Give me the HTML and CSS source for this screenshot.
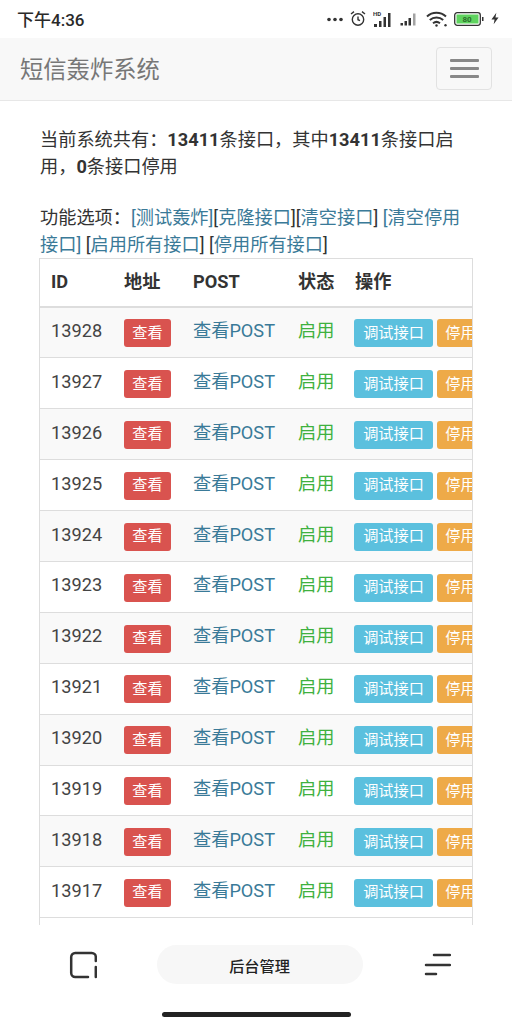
FILE: index.html
```html
<!DOCTYPE html>
<html lang="zh">
<head>
<meta charset="utf-8">
<title>短信轰炸系统</title>
<link rel="stylesheet" href="styles.css">
</head>
<body>
<div class="phone">
  <div class="status">
    <span class="time">下午4:36</span>
    <div class="status-icons">
      <svg width="16" height="6" viewBox="0 0 16 6"><circle cx="2" cy="3.500" r="1.800"/><circle cx="8" cy="3.500" r="1.800"/><circle cx="14" cy="3.500" r="1.800"/></svg>
      <svg class="alarm" width="16" height="17" viewBox="0 0 16 17"><circle cx="8" cy="9.500" r="5.700"/><path d="M8 6.500v3.200l2 1M1 4l3-2.400M15 4l-3-2.400"/></svg>
      <svg width="20" height="18" viewBox="0 0 20 18"><text x="0" y="6" class="hd">HD</text><path d="M1 14h3v3H1zM6 11h2.500v6H6zM10.500 7h2.500v10h-2.500zM15 3h2.500v14H15z"/></svg>
      <svg width="16" height="14" viewBox="0 0 16 14"><path d="M0.500 11h2.500v2.500H0.500zM4.500 9h2.500v4.500H4.500zM8.500 6h2.500v7.500H8.500z"/><path class="dim" d="M13 1.500h2.500v12H13z"/></svg>
      <svg class="wifi" width="21" height="16" viewBox="0 0 21 16"><path d="M1 5.500c5.300-5 13.500-5 19 0M3.800 9c3.800-3.300 9.600-3.300 13.400 0M7 12.200c2-1.500 5-1.500 7 0"/><circle cx="10.500" cy="14.500" r="1.200" class="fill"/><circle cx="19.500" cy="14.300" r="1.200" class="fill"/></svg>
      <svg width="30" height="14" viewBox="0 0 30 14"><rect class="batt" x="0.700" y="0.700" width="25.600" height="12.600" rx="2.500"/><rect class="charge" x="2.500" y="2.500" width="22" height="9"/><text x="8.500" y="10" class="pct">80</text><rect x="28" y="5" width="1.500" height="4"/></svg>
      <svg width="8" height="13" viewBox="0 0 9 13"><path d="M6 0L0.500 7.500H4L3 13 8.500 5.500H5z"/></svg>
    </div>
  </div>

  <nav class="navbar">
    <span class="brand">短信轰炸系统</span>
    <button class="toggle" type="button" aria-label="菜单"><i></i><i></i><i></i></button>
  </nav>

  <main class="content">
    <p class="summary">当前系统共有：<b>13411</b>条接口，其中<b>13411</b>条接口启用，<b>0</b>条接口停用</p>
    <p class="options">功能选项：<a>[测试轰炸]</a>[<a>克隆接口</a>][<a>清空接口</a>] <a>[清空停用接口]</a> [<a>启用所有接口</a>] [<a>停用所有接口</a>]</p>
    <div class="table-wrap">
      <table>
        <thead>
          <tr><th class="c-id">ID</th><th class="c-addr">地址</th><th class="c-post">POST</th><th class="c-state">状态</th><th class="c-op">操作</th></tr>
        </thead>
        <tbody>
          <tr><td>13928</td><td><span class="btn red">查看</span></td><td><a>查看POST</a></td><td class="on">启用</td><td class="ops"><span class="btn blue">调试接口</span><span class="btn orange">停用</span></td></tr>
          <tr><td>13927</td><td><span class="btn red">查看</span></td><td><a>查看POST</a></td><td class="on">启用</td><td class="ops"><span class="btn blue">调试接口</span><span class="btn orange">停用</span></td></tr>
          <tr><td>13926</td><td><span class="btn red">查看</span></td><td><a>查看POST</a></td><td class="on">启用</td><td class="ops"><span class="btn blue">调试接口</span><span class="btn orange">停用</span></td></tr>
          <tr><td>13925</td><td><span class="btn red">查看</span></td><td><a>查看POST</a></td><td class="on">启用</td><td class="ops"><span class="btn blue">调试接口</span><span class="btn orange">停用</span></td></tr>
          <tr><td>13924</td><td><span class="btn red">查看</span></td><td><a>查看POST</a></td><td class="on">启用</td><td class="ops"><span class="btn blue">调试接口</span><span class="btn orange">停用</span></td></tr>
          <tr><td>13923</td><td><span class="btn red">查看</span></td><td><a>查看POST</a></td><td class="on">启用</td><td class="ops"><span class="btn blue">调试接口</span><span class="btn orange">停用</span></td></tr>
          <tr><td>13922</td><td><span class="btn red">查看</span></td><td><a>查看POST</a></td><td class="on">启用</td><td class="ops"><span class="btn blue">调试接口</span><span class="btn orange">停用</span></td></tr>
          <tr><td>13921</td><td><span class="btn red">查看</span></td><td><a>查看POST</a></td><td class="on">启用</td><td class="ops"><span class="btn blue">调试接口</span><span class="btn orange">停用</span></td></tr>
          <tr><td>13920</td><td><span class="btn red">查看</span></td><td><a>查看POST</a></td><td class="on">启用</td><td class="ops"><span class="btn blue">调试接口</span><span class="btn orange">停用</span></td></tr>
          <tr><td>13919</td><td><span class="btn red">查看</span></td><td><a>查看POST</a></td><td class="on">启用</td><td class="ops"><span class="btn blue">调试接口</span><span class="btn orange">停用</span></td></tr>
          <tr><td>13918</td><td><span class="btn red">查看</span></td><td><a>查看POST</a></td><td class="on">启用</td><td class="ops"><span class="btn blue">调试接口</span><span class="btn orange">停用</span></td></tr>
          <tr><td>13917</td><td><span class="btn red">查看</span></td><td><a>查看POST</a></td><td class="on">启用</td><td class="ops"><span class="btn blue">调试接口</span><span class="btn orange">停用</span></td></tr>
        </tbody>
      </table>
    </div>
  </main>

  <footer class="bottom">
    <div class="bottom-row">
      <svg class="b-icon" width="28" height="28" viewBox="0 0 28 28"><path d="M26.800 10V6a4 4 0 0 0-4-4H6.200a4 4 0 0 0-4 4V22a4 4 0 0 0 4 4H19"/><path d="M26.800 16v10"/></svg>
      <div class="pill">后台管理</div>
      <svg class="b-icon" width="27" height="26" viewBox="0 0 27 26"><path d="M10 3h16M2 13h24M2 22h10"/></svg>
    </div>
    <div class="home-bar"></div>
  </footer>
</div>
</body>
</html>
```
FILE: styles.css
```css
* { box-sizing: border-box; }
html, body { margin: 0; padding: 0; }
body { background: #fff; font-family: Roboto, "Noto Sans CJK SC", sans-serif; color: #333; }
.phone { width: 512px; height: 1024px; display: flex; flex-direction: column; overflow: hidden; position: relative; }

.status { height: 38px; flex: none; display: flex; align-items: center; justify-content: space-between; padding: 0 13px 1px 17px; }
.time { font-size: 17px; font-weight: 500; color: #2a2a2a; }
.status-icons { display: flex; align-items: center; gap: 7px; }
.status-icons svg { fill: #333; }
.alarm { fill: none !important; stroke: #333; stroke-width: 1.400; }
.wifi { fill: none !important; stroke: #333; stroke-width: 2; margin-left: 3px; }
.wifi .fill { fill: #333; stroke: none; }
.dim { opacity: .45; }
.hd { font: 700 6px Roboto, sans-serif; }
.batt { fill: none; stroke: #333; stroke-width: 1.300; }
.charge { fill: #5fd35f; }
.pct { font: 700 8px Roboto, sans-serif; fill: #2c6e2c; }

.navbar { height: 63px; flex: none; background: #f8f8f8; border-bottom: 1px solid #e7e7e7; display: flex; align-items: center; justify-content: space-between; padding: 0 20px 2px 20px; }
.brand { font-size: 23.300px; color: #777; }
.toggle { width: 56px; height: 43px; border: 1px solid #e2e2e2; border-radius: 4px; background: transparent; display: flex; flex-direction: column; align-items: center; justify-content: center; gap: 5px; padding: 0; }
.toggle i { display: block; width: 29px; height: 3px; border-radius: 1px; background: #888; }

.content { flex: 1; min-height: 0; padding: 25px 39px 0 40px; overflow: hidden; font-size: 18.200px; line-height: 27px; }
.summary { margin: 0 0 24px; }
.summary b { font-weight: 700; }
.options { margin: 0; }
.options a { color: #3a7a98; }

.table-wrap { width: 434px; margin-left: -1px; border: 1px solid #ddd; border-bottom: 0; min-height: 700px; overflow: hidden; }
table { border-collapse: collapse; table-layout: fixed; width: 560px; font-size: 18.200px; }
.c-id { width: 73px; }
.c-addr { width: 69px; }
.c-post { width: 105px; }
.c-state { width: 57px; }
th { text-align: left; font-weight: 700; height: 48px; padding: 0 0 2px 11px; border-bottom: 2px solid #ddd; color: #333; }
td { height: 50.900px; padding: 0 0 4px 11px; border-bottom: 1px solid #ddd; vertical-align: middle; white-space: nowrap; color: #444; }
tbody tr:nth-child(odd) { background: #f9f9f9; }
td a { color: #3a7a98; }
.on { color: #3fb13f; }
.btn { display: inline-flex; align-items: center; justify-content: center; height: 28px; border-radius: 3px; color: #fff; font-size: 15.200px; position: relative; top: 2px; }
.red { width: 47px; background: #d9534f; }
.blue { width: 79px; margin-left: -1px; background: #5bc0de; }
.orange { width: 47px; background: #eeaa48; margin-left: 4px; }

.bottom { flex: none; height: 99px; background: #fff; position: relative; z-index: 1; display: flex; flex-direction: column; align-items: center; }
.bottom-row { width: 100%; height: 79px; display: flex; align-items: center; justify-content: space-between; padding: 0 61px 0 69px; }
.b-icon { fill: none; stroke: #333; stroke-width: 2.500; stroke-linecap: round; }
.pill { width: 206px; height: 39px; margin-left: -2px; border-radius: 20px; background: #f7f7f7; display: flex; align-items: center; justify-content: center; font-size: 15.200px; font-weight: 500; color: #222; }
.home-bar { width: 189px; height: 5px; margin-top: 8px; background: #222; border-radius: 3px; }
```
